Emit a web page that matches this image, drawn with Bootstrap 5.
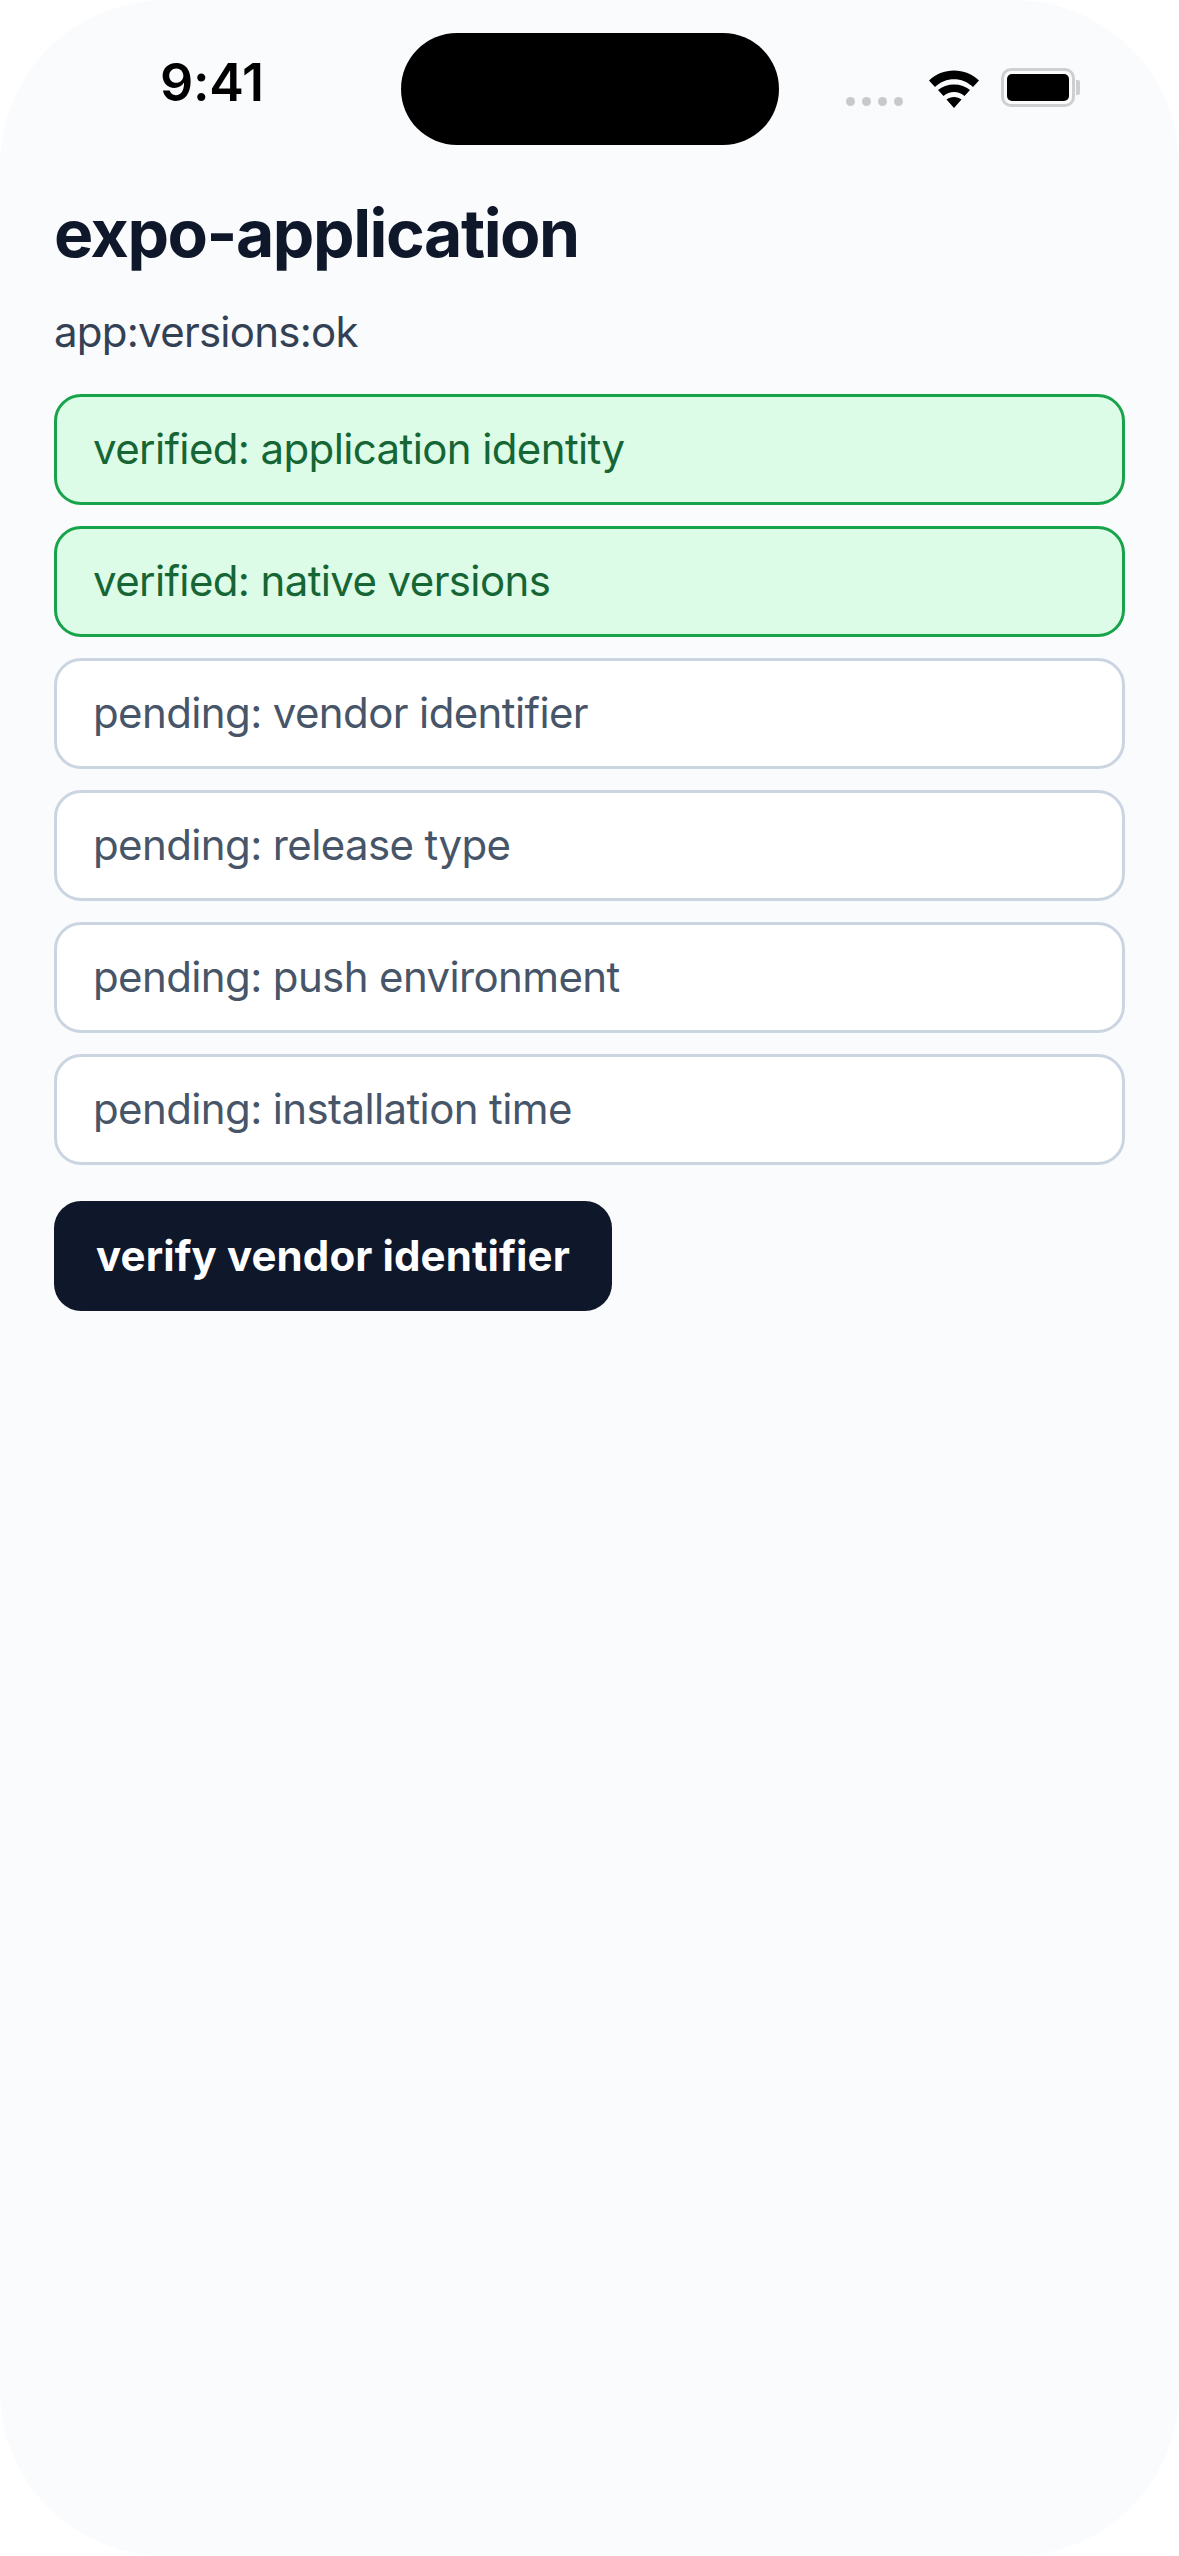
<!DOCTYPE html>
<html lang="en">
<head>
<meta charset="utf-8">
<title>expo-application</title>
<link href="https://cdn.jsdelivr.net/npm/bootstrap@5.3.0/dist/css/bootstrap.min.css" rel="stylesheet">
<style>
html, body { margin: 0; background: #fff; }
body { font-family: Inter, "Liberation Sans", sans-serif; }
.phone-screen { width: 1179px; height: 2556px; background: #fafbfd; border-radius: 165px; overflow: hidden; }
.status-row { height: 145px; padding-top: 33px; }
.clock-cell { width: 401px; padding-left: 160px; padding-top: 20px; font-size: 52px; line-height: 60px; font-weight: 600; color: #000; letter-spacing: -0.3px; }
.island { width: 378px; height: 112px; background: #000; border-radius: 56px; }
.indicators { padding-left: 67px; height: 112px; }
.sig-dots { gap: 7px; margin-top: 64px; }
.sig-dots i { display: block; width: 9px; height: 9px; border-radius: 50%; background: #c9c9c9; }
.wifi-glyph { display: block; width: 50px; height: 38px; margin-left: 26px; margin-top: 37px; }
.batt-shell { width: 74px; height: 39px; margin-left: 22px; margin-top: 35px; border: 3px solid #cfcfcf; border-radius: 10px; padding: 3px; }
.batt-shell b { display: block; height: 100%; background: #000; border-radius: 5px; }
.batt-nub { width: 4px; height: 15px; margin-top: 47px; margin-left: 1px; background: #cfcfcf; border-radius: 0 2px 2px 0; }
.page-body { padding: 0 54px; }
.app-title { margin: 48px 0 0; font-size: 66px; line-height: 80px; font-weight: 700; color: #0f172a; letter-spacing: -1.45px; }
.app-status { margin: 29px 0 0; font-size: 42px; line-height: 60px; color: #334155; letter-spacing: -0.75px; }
.check-list { margin-top: 32px; gap: 21px; }
.check-row { height: 111px; padding: 0 36px 2px; border: 3px solid #cbd5e1; border-radius: 27px; background: #fff; color: #475569; font-size: 42px; line-height: 58px; letter-spacing: -0.62px; }
.check-row.is-done { background: #dcfce7; border-color: #16a34a; color: #166534; }
.verify-btn { margin-top: 36px; height: 110px; padding: 0 42px; min-width: 558px; border: 0; border-radius: 27px; background: #0f172a; color: #fff; font-size: 42px; font-weight: 700; line-height: 60px; letter-spacing: 0.1px; }
.verify-btn:hover { background: #0f172a; color: #fff; }
</style>
</head>
<body>
<div class="phone-screen">
  <div class="status-row d-flex">
    <div class="clock-cell">9:41</div>
    <div class="island"></div>
    <div class="indicators d-flex">
      <div class="sig-dots d-flex"><i></i><i></i><i></i><i></i></div>
      <svg class="wifi-glyph" viewBox="0 0 50 38"><path fill="#000" d="M25 38 L17.5 29.5 C21.5 26 28.5 26 32.5 29.5 Z M14.5 26 L9 20 C17 12.5 33 12.5 41 20 L35.5 26 C29.5 20.5 20.5 20.5 14.5 26 Z M6 17 L0 10.5 C13 -3 37 -3 50 10.5 L44 17 C33.5 6.5 16.5 6.5 6 17 Z"/></svg>
      <div class="batt-shell"><b></b></div>
      <div class="batt-nub"></div>
    </div>
  </div>
  <main class="page-body">
    <h1 class="app-title">expo-application</h1>
    <p class="app-status">app:versions:ok</p>
    <div class="check-list d-flex flex-column">
      <div class="check-row is-done d-flex align-items-center">verified: application identity</div>
      <div class="check-row is-done d-flex align-items-center">verified: native versions</div>
      <div class="check-row d-flex align-items-center">pending: vendor identifier</div>
      <div class="check-row d-flex align-items-center">pending: release type</div>
      <div class="check-row d-flex align-items-center">pending: push environment</div>
      <div class="check-row d-flex align-items-center">pending: installation time</div>
    </div>
    <button type="button" class="btn verify-btn">verify vendor identifier</button>
  </main>
</div>
<script src="https://cdn.jsdelivr.net/npm/bootstrap@5.3.0/dist/js/bootstrap.bundle.min.js"></script>
</body>
</html>
